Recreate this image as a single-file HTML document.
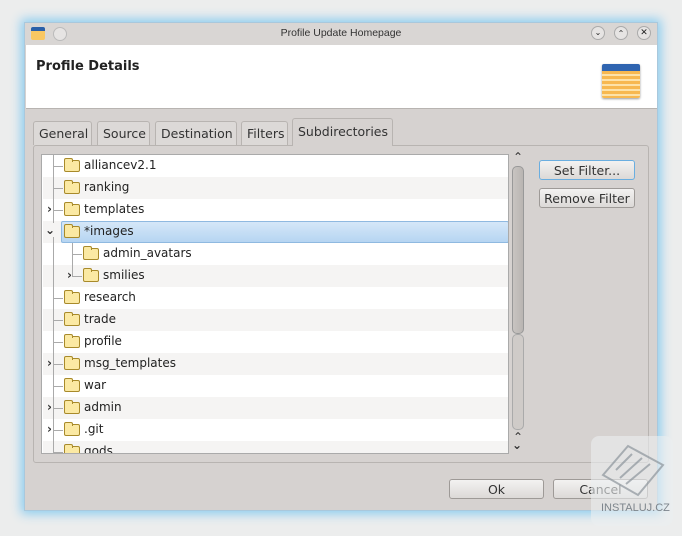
<!DOCTYPE html>
<html><head><style>
*{box-sizing:border-box;margin:0;padding:0}
body{width:682px;height:536px;background:#eceded;position:relative;overflow:hidden;font-family:"DejaVu Sans","Liberation Sans",sans-serif;font-size:12px;color:#222}
.a{position:absolute}
.win{left:24px;top:22px;width:634px;height:489px;background:#d6d2d0;box-shadow:0 0 10px 3px #8ccdf0;border:1px solid #a9c8dc}
.tab{position:absolute;top:121px;height:24px;border:1px solid #b8b4b1;border-bottom:none;border-radius:3px 3px 0 0;background:#dcd9d7;color:#333;font-size:12.5px;padding:4px 5px 0}
.row{position:absolute;left:1px;width:466px;height:22px}
.row span{position:absolute;top:3px}
.fold{position:absolute;top:5px;width:16px;height:12px;background:#fbe9a3;border:1px solid #a88a2a;border-radius:2px}
.fold:before{content:"";position:absolute;left:-1px;top:-3px;width:7px;height:3px;background:#fbe9a3;border:1px solid #a88a2a;border-bottom:none;border-radius:2px 2px 0 0}
.btn{position:absolute;border:1px solid #9e9a97;border-radius:3px;background:linear-gradient(#f3f2f1,#dcd9d7);text-align:center;font-size:12.5px;color:#333}
.ln{position:absolute;background:#aaa}
.ar{position:absolute;font-size:12px;color:#333;font-weight:bold}
</style></head><body>
<div class="a win">
 <div class="a" style="left:0;top:0;width:632px;height:22px;background:#d9d6d4"></div>
 <div class="a" style="left:6px;top:4px;width:14px;height:13px;background:#f9c762;border-top:4px solid #2a5fa8;border-radius:2px"></div>
 <div class="a" style="left:28px;top:4px;width:14px;height:14px;border-radius:50%;background:#e6e4e3;border:1px solid #bbb"></div>
 <div class="a" style="left:0;top:4px;width:632px;text-align:center;font-family:'Liberation Sans',sans-serif;font-size:10.5px;color:#333">Profile Update Homepage</div>
 <div class="a" style="left:566px;top:3px;width:14px;height:14px;border-radius:50%;background:#e6e4e3;border:1px solid #aaa;font-size:8px;text-align:center;line-height:12px">⌄</div>
 <div class="a" style="left:589px;top:3px;width:14px;height:14px;border-radius:50%;background:#e6e4e3;border:1px solid #aaa;font-size:8px;text-align:center;line-height:14px">⌃</div>
 <div class="a" style="left:612px;top:3px;width:14px;height:14px;border-radius:50%;background:#e6e4e3;border:1px solid #aaa;font-size:9px;text-align:center;line-height:12px">✕</div>
 <div class="a" style="left:1px;top:22px;width:631px;height:64px;background:#fff;border-bottom:1px solid #b8b4b1"></div>
 <div class="a" style="left:11px;top:36px;font-weight:bold;font-size:13px;color:#222">Profile Details</div>
 <div class="a" style="left:577px;top:41px;width:38px;height:34px;background:repeating-linear-gradient(#f7b850 0 3px,#fde2a8 3px 5px);border-top:7px solid #2f64b0;border-radius:2px;box-shadow:0 1px 2px #999"></div>
</div>
<div class="tab" style="left:33px;width:59px">General</div>
<div class="tab" style="left:97px;width:53px">Source</div>
<div class="tab" style="left:155px;width:82px">Destination</div>
<div class="tab" style="left:241px;width:47px">Filters</div>
<div class="a" style="left:33px;top:145px;width:616px;height:318px;border:1px solid #b8b4b1;border-radius:3px;background:#d6d2d0"></div>
<div class="tab" style="left:292px;top:118px;width:101px;height:28px;background:#d6d2d0;padding-top:5px">Subdirectories</div>
<div class="a" style="left:41px;top:154px;width:468px;height:300px;background:#fff;border:1px solid #aaa;overflow:hidden">
 <div class="row" style="top:22px;background:#f5f4f3"></div>
 <div class="row" style="top:66px;background:#f5f4f3"></div>
 <div class="row" style="top:110px;background:#f5f4f3"></div>
 <div class="row" style="top:154px;background:#f5f4f3"></div>
 <div class="row" style="top:198px;background:#f5f4f3"></div>
 <div class="row" style="top:242px;background:#f5f4f3"></div>
 <div class="row" style="top:286px;background:#f5f4f3"></div>
 <div class="ln" style="left:11px;top:0;width:1px;height:300px"></div>
 <div class="ln" style="left:30px;top:88px;width:1px;height:33px"></div>
 <div class="row" style="top:0"><div class="ln" style="left:10px;top:11px;width:10px;height:1px"></div><div class="fold" style="left:21px"></div><span style="left:41px">alliancev2.1</span></div>
 <div class="row" style="top:22px"><div class="ln" style="left:10px;top:11px;width:10px;height:1px"></div><div class="fold" style="left:21px"></div><span style="left:41px">ranking</span></div>
 <div class="row" style="top:44px"><div class="ln" style="left:10px;top:11px;width:10px;height:1px"></div><div class="ar" style="left:4px;top:3px;background:#fff">›</div><div class="fold" style="left:21px"></div><span style="left:41px">templates</span></div>
 <div class="row" style="top:66px"><div class="a" style="left:18px;top:0;width:448px;height:22px;background:linear-gradient(#d5e7f8,#b6d5f2);border:1px solid #8fb9e0;border-radius:2px"></div><div class="ar" style="left:2px;top:2px;background:#f5f4f3">⌄</div><div class="fold" style="left:21px"></div><span style="left:41px">*images</span></div>
 <div class="row" style="top:88px"><div class="ln" style="left:29px;top:11px;width:10px;height:1px"></div><div class="fold" style="left:40px"></div><span style="left:60px">admin_avatars</span></div>
 <div class="row" style="top:110px"><div class="ln" style="left:29px;top:11px;width:10px;height:1px"></div><div class="ar" style="left:24px;top:3px;background:#f5f4f3">›</div><div class="fold" style="left:40px"></div><span style="left:60px">smilies</span></div>
 <div class="row" style="top:132px"><div class="ln" style="left:10px;top:11px;width:10px;height:1px"></div><div class="fold" style="left:21px"></div><span style="left:41px">research</span></div>
 <div class="row" style="top:154px"><div class="ln" style="left:10px;top:11px;width:10px;height:1px"></div><div class="fold" style="left:21px"></div><span style="left:41px">trade</span></div>
 <div class="row" style="top:176px"><div class="ln" style="left:10px;top:11px;width:10px;height:1px"></div><div class="fold" style="left:21px"></div><span style="left:41px">profile</span></div>
 <div class="row" style="top:198px"><div class="ln" style="left:10px;top:11px;width:10px;height:1px"></div><div class="ar" style="left:4px;top:3px;background:#f5f4f3">›</div><div class="fold" style="left:21px"></div><span style="left:41px">msg_templates</span></div>
 <div class="row" style="top:220px"><div class="ln" style="left:10px;top:11px;width:10px;height:1px"></div><div class="fold" style="left:21px"></div><span style="left:41px">war</span></div>
 <div class="row" style="top:242px"><div class="ln" style="left:10px;top:11px;width:10px;height:1px"></div><div class="ar" style="left:4px;top:3px;background:#f5f4f3">›</div><div class="fold" style="left:21px"></div><span style="left:41px">admin</span></div>
 <div class="row" style="top:264px"><div class="ln" style="left:10px;top:11px;width:10px;height:1px"></div><div class="ar" style="left:4px;top:3px;background:#fff">›</div><div class="fold" style="left:21px"></div><span style="left:41px">.git</span></div>
 <div class="row" style="top:286px"><div class="ln" style="left:10px;top:11px;width:10px;height:1px"></div><div class="fold" style="left:21px"></div><span style="left:41px">gods</span></div>
</div>
<div class="ar" style="left:513px;top:150px;font-weight:normal">⌃</div>
<div class="a" style="left:512px;top:166px;width:12px;height:168px;border:1px solid #999;border-radius:5px;background:linear-gradient(90deg,#c8c4c1,#b9b5b2)"></div>
<div class="a" style="left:512px;top:334px;width:12px;height:96px;border:1px solid #aaa;border-radius:5px;background:#cfcbc8"></div>
<div class="ar" style="left:513px;top:430px;font-weight:normal">⌃</div>
<div class="ar" style="left:512px;top:438px">⌄</div>
<div class="btn" style="left:539px;top:160px;width:96px;height:20px;border-color:#6aaee0;padding-top:2px">Set Filter...</div>
<div class="btn" style="left:539px;top:188px;width:96px;height:20px;padding-top:2px">Remove Filter</div>
<div class="btn" style="left:449px;top:479px;width:95px;height:20px;padding-top:2px">Ok</div>
<div class="btn" style="left:553px;top:479px;width:95px;height:20px;padding-top:2px">Cancel</div>
<div class="a" style="left:591px;top:436px;width:82px;height:90px;background:rgba(235,238,240,0.6);border-radius:8px"></div>
<svg class="a" style="left:598px;top:440px" width="70" height="60" viewBox="0 0 70 60"><g fill="none" stroke="#8d959c" stroke-width="2" opacity=".7"><path d="M5 35 L30 6 L65 25 L40 55 Z"/><path d="M18 30 L34 14 M22 38 L44 18 M28 44 L52 24"/></g></svg>
<div class="a" style="left:601px;top:502px;font-family:'Liberation Sans',sans-serif;font-size:11px;color:#7d858c">INSTALUJ.CZ</div>
</body></html>
